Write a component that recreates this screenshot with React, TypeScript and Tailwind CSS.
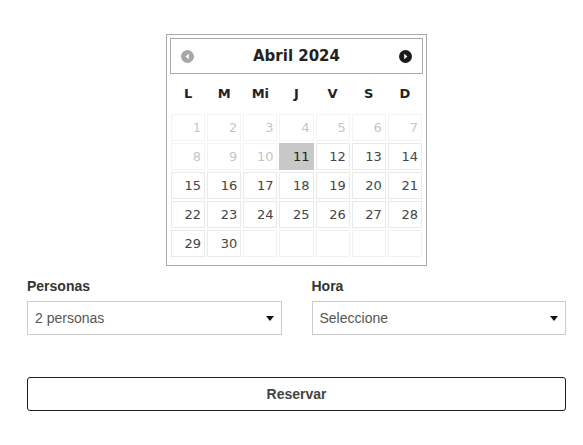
import React, { useState } from 'react';

const DAY_NAMES = ['L', 'M', 'Mi', 'J', 'V', 'S', 'D'];
const TODAY = 11;

// Abril 2024 starts on a Monday; 30 days, 5 rows of 7
const buildCells = () => {
    const cells: (number | null)[] = [];
    for (let d = 1; d <= 30; d++) cells.push(d);
    while (cells.length < 35) cells.push(null);
    return cells;
};

const NavIcon: React.FC<{ dir: 'prev' | 'next'; disabled?: boolean }> = ({ dir, disabled }) => (
    <svg width="13" height="13" viewBox="0 0 13 13">
        <circle cx="6.5" cy="6.5" r="6.5" fill={disabled ? '#a8a8a8' : '#1b1b1b'} />
        {dir === 'prev' ? (
            <polygon points="7.8,3.8 4.6,6.5 7.8,9.2" fill="#fff" />
        ) : (
            <polygon points="5.2,3.8 8.4,6.5 5.2,9.2" fill="#fff" />
        )}
    </svg>
);

const Calendar: React.FC = () => {
    const cells = buildCells();

    return (
        <div className="w-[261px] border border-[#aaaaaa] bg-white p-[3px] pb-[7px] font-['DejaVu_Sans',Verdana,sans-serif]">
            <div className="flex h-[36px] items-center justify-between border border-[#aaaaaa] pl-[10px] pr-[10px]">
                <NavIcon dir="prev" disabled />
                <span className="text-[15px] font-bold text-[#222]">Abril 2024</span>
                <NavIcon dir="next" />
            </div>
            <div className="grid grid-cols-7">
                {DAY_NAMES.map((n) => (
                    <div
                        key={n}
                        className="flex h-[39px] items-center justify-center text-[13px] font-bold text-[#222]"
                    >
                        {n}
                    </div>
                ))}
                {cells.map((d, i) => {
                    const disabled = d !== null && d < TODAY;
                    const active = d === TODAY;
                    let cls = 'border-[#e9e9e9] bg-white text-[#454545]';
                    if (disabled) cls = 'border-[#f3f3f3] bg-white text-[#c6c6c6]';
                    if (active) cls = 'border-[#c8c8c8] bg-[#c8c8c8] text-[#212121]';
                    if (d === null) cls = 'border-[#f1f1f1] bg-white';
                    return (
                        <div key={i} className="p-[1px]">
                            <div
                                className={`flex h-[27px] items-center justify-end border pr-[3px] text-[13px] ${cls}`}
                            >
                                {d ?? ''}
                            </div>
                        </div>
                    );
                })}
            </div>
        </div>
    );
};

const Caret: React.FC = () => (
    <svg
        width="8"
        height="5"
        viewBox="0 0 8 5"
        className="pointer-events-none absolute right-[8px] top-[15px]"
    >
        <polygon points="0,0 8,0 4,5" fill="#111" />
    </svg>
);

const SelectField: React.FC<{ label: string; value: string; options: string[]; onChange: (v: string) => void }> = ({
    label,
    value,
    options,
    onChange,
}) => (
    <div className="flex flex-col">
        <label className="mb-[6px] h-[18px] text-[14px] font-bold leading-[18px] text-[#333]">{label}</label>
        <div className="relative">
            <select
                value={value}
                onChange={(e) => onChange(e.target.value)}
                className="h-[34px] w-full appearance-none border border-[#cccccc] bg-white pl-[7px] text-[14px] text-[#555] outline-none"
            >
                {options.map((o) => (
                    <option key={o}>{o}</option>
                ))}
            </select>
            <Caret />
        </div>
    </div>
);

const App: React.FC = () => {
    const [personas, setPersonas] = useState('2 personas');
    const [hora, setHora] = useState('Seleccione');

    return (
        <div className="min-h-[445px] bg-white font-['Liberation_Sans',Arial,sans-serif]">
            <div className="ml-[27px] w-[539px] pt-[34px]">
                <div className="flex justify-center">
                    <Calendar />
                </div>
                <div className="mt-[11px] grid grid-cols-2 gap-x-[30px]">
                    <SelectField
                        label="Personas"
                        value={personas}
                        options={['1 persona', '2 personas', '3 personas', '4 personas']}
                        onChange={setPersonas}
                    />
                    <SelectField
                        label="Hora"
                        value={hora}
                        options={['Seleccione', '13:00', '13:30', '14:00']}
                        onChange={setHora}
                    />
                </div>
                <button className="mt-[42px] h-[34px] w-full rounded-[3px] border border-[#1f1f1f] bg-white text-[14px] font-bold text-[#444]">
                    Reservar
                </button>
            </div>
        </div>
    );
};

export default App;
